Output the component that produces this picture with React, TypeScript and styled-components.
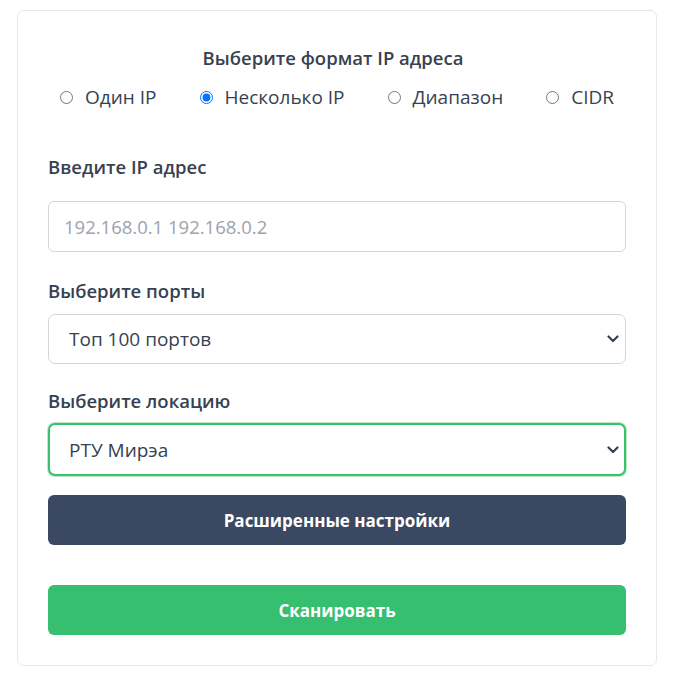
import React from "react";
import styled, { createGlobalStyle } from "styled-components";

const Global = createGlobalStyle`
  html, body { margin: 0; padding: 0; background: #ffffff; }
  body { font-family: "Open Sans", "Noto Sans", Arial, sans-serif; color: #374151; }
  * { box-sizing: border-box; }
`;

const Page = styled.div`
  padding: 10px 0 0 17px;
`;

const Card = styled.form`
  width: 640px;
  border: 1px solid #e5e7eb;
  border-radius: 7px;
  padding: 35px 30px 30px;
  display: flex;
  flex-direction: column;
`;

const Title = styled.div`
  text-align: center;
  font-size: 18.5px;
  line-height: 24px;
  font-weight: 600;
  color: #374151;
  transform: translateX(-4px);
`;

const RadioRow = styled.div`
  display: flex;
  justify-content: center;
  gap: 43px;
  margin-top: 15px;
`;

const RadioLabel = styled.label`
  display: flex;
  align-items: center;
  gap: 12px;
  font-size: 19px;
  line-height: 24px;
  color: #374151;
`;

const Radio = styled.input`
  margin: 0;
  width: 13px;
  height: 13px;
  accent-color: #0075ff;
`;

const FieldLabel = styled.div<{ $top: number; $gap: number }>`
  font-size: 18.5px;
  line-height: 24px;
  font-weight: 600;
  color: #374151;
  margin-top: ${(p) => p.$top}px;
  margin-bottom: ${(p) => p.$gap}px;
`;

const TextInput = styled.input`
  width: 100%;
  height: 51px;
  border: 1px solid #d1d5db;
  border-radius: 6px;
  padding: 0 15px;
  font-family: inherit;
  font-size: 18.5px;
  color: #374151;
  outline: none;
  &::placeholder { color: #9ca3af; }
`;

const SelectWrap = styled.div`
  position: relative;
  width: 100%;
`;

const Select = styled.select<{ $focused?: boolean }>`
  appearance: none;
  width: 100%;
  height: ${(p) => (p.$focused ? 53 : 50)}px;
  border: ${(p) => (p.$focused ? "2px solid #3cbf6e" : "1px solid #d1d5db")};
  box-shadow: ${(p) => (p.$focused ? "0 0 0 1px rgba(60,191,110,0.35)" : "none")};
  border-radius: 7px;
  padding: 0 20px;
  padding-left: ${(p) => (p.$focused ? 19 : 20)}px;
  background: #fff;
  font-family: inherit;
  font-size: 19px;
  color: #374151;
  outline: none;
`;

const Chevron = styled.svg`
  position: absolute;
  right: 7px;
  top: 50%;
  transform: translateY(-50%);
  pointer-events: none;
`;

const Button = styled.button<{ $bg: string; $top: number }>`
  width: 100%;
  height: 50px;
  border: none;
  border-radius: 6px;
  background: ${(p) => p.$bg};
  color: #ffffff;
  font-family: inherit;
  font-size: 17px;
  font-weight: 700;
  margin-top: ${(p) => p.$top}px;
  cursor: pointer;
`;

const ChevronIcon = () => (
  <Chevron width="12" height="8" viewBox="0 0 12 8">
    <path d="M1.5 1.5 L6 6 L10.5 1.5" fill="none" stroke="#374151" strokeWidth="2.2" strokeLinecap="round" strokeLinejoin="round" />
  </Chevron>
);

export default function App() {
  return (
    <>
      <Global />
      <Page>
        <Card onSubmit={(e) => e.preventDefault()}>
          <Title>Выберите формат IP адреса</Title>
          <RadioRow>
            <RadioLabel><Radio type="radio" name="fmt" />Один IP</RadioLabel>
            <RadioLabel><Radio type="radio" name="fmt" defaultChecked />Несколько IP</RadioLabel>
            <RadioLabel><Radio type="radio" name="fmt" />Диапазон</RadioLabel>
            <RadioLabel><Radio type="radio" name="fmt" />CIDR</RadioLabel>
          </RadioRow>

          <FieldLabel $top={46} $gap={22}>Введите IP адрес</FieldLabel>
          <TextInput placeholder="192.168.0.1 192.168.0.2" />

          <FieldLabel $top={27} $gap={11}>Выберите порты</FieldLabel>
          <SelectWrap>
            <Select defaultValue="100">
              <option value="100">Топ 100 портов</option>
              <option value="1000">Топ 1000 портов</option>
            </Select>
            <ChevronIcon />
          </SelectWrap>

          <FieldLabel $top={25} $gap={10}>Выберите локацию</FieldLabel>
          <SelectWrap>
            <Select $focused defaultValue="rtu">
              <option value="rtu">РТУ Мирэа</option>
            </Select>
            <ChevronIcon />
          </SelectWrap>

          <Button type="button" $bg="#3a4862" $top={19}>Расширенные настройки</Button>
          <Button type="submit" $bg="#35bf6f" $top={40}>Сканировать</Button>
        </Card>
      </Page>
    </>
  );
}
